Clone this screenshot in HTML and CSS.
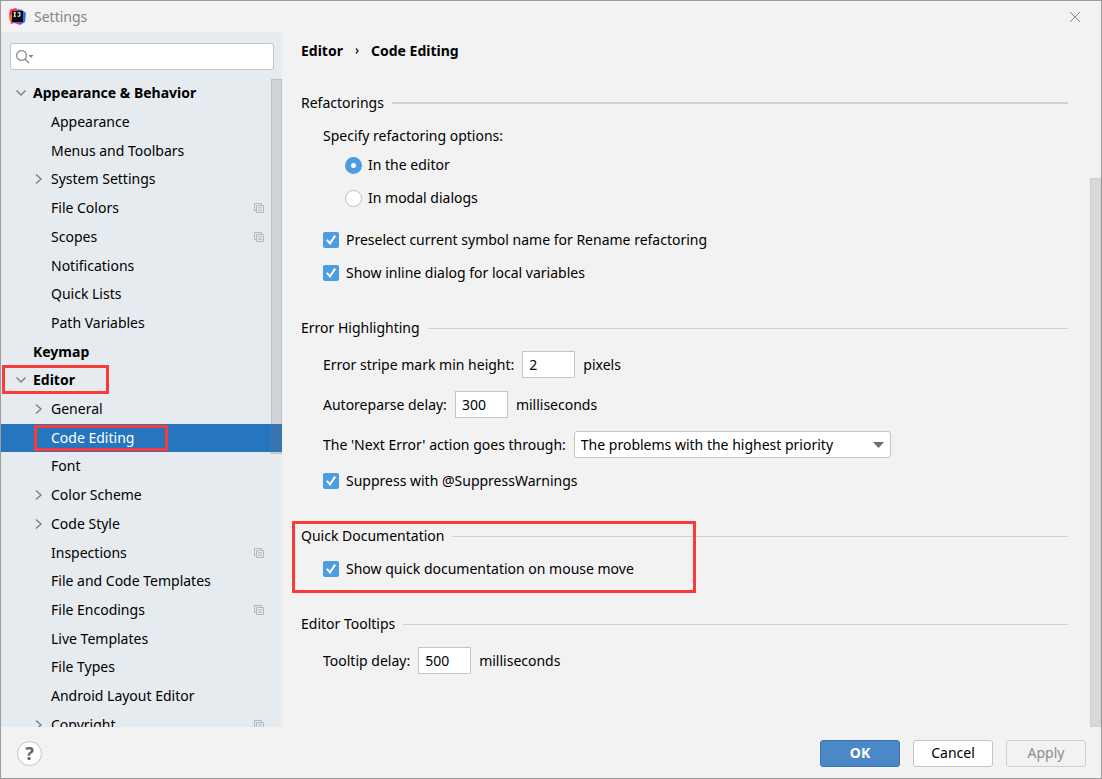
FILE: index.html
```html
<!DOCTYPE html>
<html lang="en">
<head>
<meta charset="utf-8">
<title>Settings</title>
<link rel="stylesheet" href="styles.css">
</head>
<body>
<svg class="defs" aria-hidden="true">
  <symbol id="down" viewBox="0 0 12 12"><path d="M1.500 3.500 6 8l4.500-4.500" fill="none" stroke="#7f8387" stroke-width="1.500"/></symbol>
  <symbol id="right" viewBox="0 0 12 12"><path d="M3 1.500 8 6l-5 4.500" fill="none" stroke="#7f8387" stroke-width="1.500"/></symbol>
  <symbol id="copy" viewBox="0 0 10 10"><path d="M2 7.500H.5V.5h7V2" fill="none" stroke="#b0b8be"/><path d="M2.500 2.500h7v7h-7z" fill="#e6ebef" stroke="#b0b8be"/><path d="M4 4.500h4M4 6h4M4 7.500h4" stroke="#b5bdc3" stroke-width=".8"/></symbol>
</svg>
<div class="window">
  <header class="titlebar">
    <svg class="logo" viewBox="0 0 17 17" aria-hidden="true">
      <path d="M1 1.500 7 0l3 3L4 11 0 7z" fill="#fe315d"/>
      <path d="M0 8l4-2 2 6-4 2-1.500-2z" fill="#f97a12"/>
      <path d="M9 1l4 1 4 3-1 9-5 3-6-4z" fill="#3b6cf0"/>
      <path d="M1.500 16l1-5 4-1 5 6-2 .5-4-1.500z" fill="#c838c8"/>
      <path d="M3 3h11v11H3z" fill="#0a0a0a"/>
      <path d="M4.500 4.700H7M5.750 4.700v3.600M4.500 8.300H7M8.500 4.700h2.400v2.600q0 1-1 1H8.500" fill="none" stroke="#fff" stroke-width="1.100"/>
    </svg>
    <h1>Settings</h1>
    <button class="close" aria-label="Close"><svg width="12" height="12" viewBox="0 0 12 12"><path d="M1 1l10 10M11 1 1 11" stroke="#8a8a8a"/></svg></button>
  </header>
  <div class="body">
    <aside class="sidebar">
      <div class="search">
        <svg width="18" height="14" viewBox="0 0 18 14" aria-hidden="true"><circle cx="5.500" cy="5.500" r="4.900" fill="none" stroke="#8a9299" stroke-width="1.300"/><path d="M9 9l4 4" stroke="#8a9299" stroke-width="1.500"/><path d="M12.500 5h5l-2.500 3z" fill="#7f878d"/></svg>
        <input type="text" aria-label="Search settings">
      </div>
      <nav class="tree-area">
        <ul class="tree">
          <li class="top"><svg class="arrow"><use href="#down"/></svg><a href="#">Appearance &amp; Behavior</a></li>
          <li><a href="#">Appearance</a></li>
          <li><a href="#">Menus and Toolbars</a></li>
          <li><svg class="arrow"><use href="#right"/></svg><a href="#">System Settings</a></li>
          <li><a href="#">File Colors</a><svg class="copy"><use href="#copy"/></svg></li>
          <li><a href="#">Scopes</a><svg class="copy"><use href="#copy"/></svg></li>
          <li><a href="#">Notifications</a></li>
          <li><a href="#">Quick Lists</a></li>
          <li><a href="#">Path Variables</a></li>
          <li class="top"><a href="#">Keymap</a></li>
          <li class="top"><svg class="arrow"><use href="#down"/></svg><a href="#">Editor</a><span class="mark mark-editor"></span></li>
          <li><svg class="arrow"><use href="#right"/></svg><a href="#">General</a></li>
          <li class="selected"><a href="#" aria-current="page">Code Editing</a><span class="mark mark-page"></span></li>
          <li><a href="#">Font</a></li>
          <li><svg class="arrow"><use href="#right"/></svg><a href="#">Color Scheme</a></li>
          <li><svg class="arrow"><use href="#right"/></svg><a href="#">Code Style</a></li>
          <li><a href="#">Inspections</a><svg class="copy"><use href="#copy"/></svg></li>
          <li><a href="#">File and Code Templates</a></li>
          <li><a href="#">File Encodings</a><svg class="copy"><use href="#copy"/></svg></li>
          <li><a href="#">Live Templates</a></li>
          <li><a href="#">File Types</a></li>
          <li><a href="#">Android Layout Editor</a></li>
          <li><svg class="arrow"><use href="#right"/></svg><a href="#">Copyright</a><svg class="copy"><use href="#copy"/></svg></li>
        </ul>
        <div class="thumb tree-thumb"></div>
      </nav>
    </aside>
    <main class="content">
      <div class="crumbs"><span>Editor</span><svg width="4" height="6" viewBox="0 0 4 6" aria-hidden="true"><path d="M1 .5 3 3 1 5.500" fill="none" stroke="#222" stroke-width="1.300"/></svg><span>Code Editing</span></div>
      <form class="sections">
        <section>
          <h2 class="strong-rule">Refactorings</h2>
          <div class="options" role="radiogroup" aria-labelledby="refopt">
            <div class="row" id="refopt">Specify refactoring options:</div>
            <div class="radios">
              <label class="row"><input type="radio" name="refactor" checked>In the editor</label>
              <label class="row"><input type="radio" name="refactor">In modal dialogs</label>
            </div>
          </div>
          <div class="checks">
            <label class="row"><input type="checkbox" checked>Preselect current symbol name for Rename refactoring</label>
            <label class="row"><input type="checkbox" checked>Show inline dialog for local variables</label>
          </div>
        </section>
        <section>
          <h2>Error Highlighting</h2>
          <div class="row field"><label for="stripe">Error stripe mark min height:</label><input id="stripe" type="text" value="2">pixels</div>
          <div class="row field"><label for="reparse">Autoreparse delay:</label><input id="reparse" type="text" value="300">milliseconds</div>
          <div class="row field"><label for="next">The 'Next Error' action goes through:</label>
            <span class="combo"><select id="next"><option>The problems with the highest priority</option></select><svg width="11" height="6" viewBox="0 0 11 6" aria-hidden="true"><path d="M0 0h11L5.500 6z" fill="#6e6e6e"/></svg></span>
          </div>
          <label class="row"><input type="checkbox" checked>Suppress with @SuppressWarnings</label>
        </section>
        <section>
          <h2>Quick Documentation</h2>
          <label class="row"><input type="checkbox" checked>Show quick documentation on mouse move</label>
          <span class="mark mark-doc"></span>
        </section>
        <section>
          <h2>Editor Tooltips</h2>
          <div class="row field"><label for="tip">Tooltip delay:</label><input id="tip" type="text" value="500">milliseconds</div>
        </section>
      </form>
      <div class="thumb content-thumb"></div>
    </main>
  </div>
  <footer class="footer">
    <button class="help" aria-label="Help">?</button>
    <button class="btn primary">OK</button>
    <button class="btn">Cancel</button>
    <button class="btn" disabled>Apply</button>
  </footer>
</div>
</body>
</html>
```
FILE: styles.css
```css
* { box-sizing: border-box; }
body {
  margin: 0;
  font: 14px/20px "Noto Sans", "Open Sans", sans-serif;
  color: #000;
}
button, input, select { font: inherit; color: inherit; margin: 0; }
h1, h2 { margin: 0; font-size: inherit; font-weight: 400; }
.defs { display: none; }

.window {
  display: flex;
  flex-direction: column;
  height: 100vh;
  border: 1px solid #9c9c9c;
  background: #f2f2f2;
}
.titlebar {
  display: flex;
  align-items: center;
  flex: none;
  height: 31px;
  padding: 0 20px 0 8px;
  gap: 8px;
  color: #858585;
}
.logo { width: 17px; height: 17px; }
.titlebar h1 { flex: 1; }
.close { display: flex; padding: 0; border: 0; background: none; }

.body { display: flex; flex: 1; min-height: 0; }
.sidebar {
  display: flex;
  flex-direction: column;
  flex: none;
  width: 281px;
  background: #e6ebef;
}
.search {
  display: flex;
  align-items: center;
  height: 27px;
  margin: 11px 8px 9px 9px;
  padding-left: 5px;
  border: 1px solid #c4c4c4;
  border-radius: 3px;
  background: #fff;
}
.search input { flex: 1; min-width: 0; border: 0; outline: 0; background: none; }
.tree-area { position: relative; flex: 1; min-height: 0; overflow: hidden; }
.tree { margin: 0; padding: 0; list-style: none; }
.tree li {
  position: relative;
  display: flex;
  align-items: center;
  height: 29px;
  padding: 0 18px 1px 50px;
}
.tree li:nth-child(10n+3), .tree li:nth-child(10n+7), .tree li:nth-child(10n) { height: 28px; padding-bottom: 0; }
.tree a { flex: 1; color: inherit; text-decoration: none; }
.tree .top { padding-left: 32px; font-weight: 700; }
.tree .selected { background: #2675bf; color: #fff; }
.arrow { width: 12px; height: 12px; margin: 0 6px 0 -18px; }
.copy { width: 10px; height: 10px; }

.thumb { position: absolute; right: 0; border: 1px solid #c9cdd1; background: rgba(120, 120, 120, .2); }
.tree-thumb { top: 0; width: 11px; height: 375px; border-color: rgba(120, 120, 120, .2); }
.content-thumb { top: 146px; bottom: 0; width: 11px; border-color: #d0d0d0; }

.mark { position: absolute; border: 3px solid #fb3a3a; pointer-events: none; }
.mark-editor { left: 1px; top: -1px; width: 107px; height: 29px; }
.mark-page { left: 33px; top: 1px; width: 134px; height: 26px; }
.mark-doc { left: -9px; top: -5px; width: 404px; height: 72px; }

.content { position: relative; flex: 1; padding: 9px 33px 0 19px; }
.crumbs { display: flex; align-items: center; gap: 12px; font-weight: 700; }
.sections { display: flex; flex-direction: column; gap: 35px; margin-top: 32px; }
section { position: relative; display: flex; flex-direction: column; gap: 13px; }
h2 { display: flex; align-items: center; gap: 8px; }
h2::after { content: ""; flex: 1; height: 1px; background: #d0d0d0; }
h2.strong-rule::after { height: 2px; }
.row { display: flex; align-items: center; gap: 7px; }
.field { gap: 8px; }
section > .row, .options, .checks { margin-left: 22px; }
.options { display: flex; flex-direction: column; gap: 9px; }
.radios, .checks { display: flex; flex-direction: column; gap: 13px; }
.radios { margin-left: 22px; }
.radios .row { gap: 6px; }
.checks { margin-top: 9px; }

.row input[type="text"] {
  width: 53px;
  height: 27px;
  padding: 0 6px;
  border: 1px solid #c4c4c4;
  background: #fff;
}
input[type="checkbox"], input[type="radio"] {
  display: grid;
  place-items: center;
  appearance: none;
  width: 16px;
  height: 16px;
  border-radius: 2px;
  background: #4d9de2;
}
input[type="checkbox"]::before {
  content: "";
  width: 10px;
  height: 10px;
  background: #fff;
  clip-path: polygon(0 55%, 16% 42%, 38% 68%, 84% 0, 100% 12%, 42% 100%);
}
input[type="radio"] { width: 17px; height: 17px; border: 1px solid #bdbdbd; border-radius: 50%; background: #fff; }
input[type="radio"]:checked { border: 6px solid #4d9de2; }
.combo { position: relative; display: flex; }
.combo select {
  appearance: none;
  width: 317px;
  height: 27px;
  padding: 0 30px 0 6px;
  border: 1px solid #c4c4c4;
  border-radius: 3px;
  background: #fff;
}
.combo svg { position: absolute; right: 7px; top: 11px; pointer-events: none; }

.footer {
  display: flex;
  align-items: center;
  flex: none;
  gap: 13px;
  height: 51px;
  padding: 1px 15px 0 16px;
}
.help {
  width: 25px;
  height: 25px;
  margin-right: auto;
  padding: 0;
  border: 1px solid #c4c4c4;
  border-radius: 50%;
  background: #fff;
  color: #666;
  font-size: 18px;
  font-weight: 700;
}
.btn {
  width: 80px;
  height: 27px;
  padding: 0;
  border: 1px solid #c4c4c4;
  border-radius: 3px;
  background: #fff;
}
.btn.primary { border-color: #3d75b2; background: #4c88c8; color: #fff; font-weight: 700; }
.btn:disabled { background: transparent; border-color: #cfcfcf; color: #8c8c8c; }
```
